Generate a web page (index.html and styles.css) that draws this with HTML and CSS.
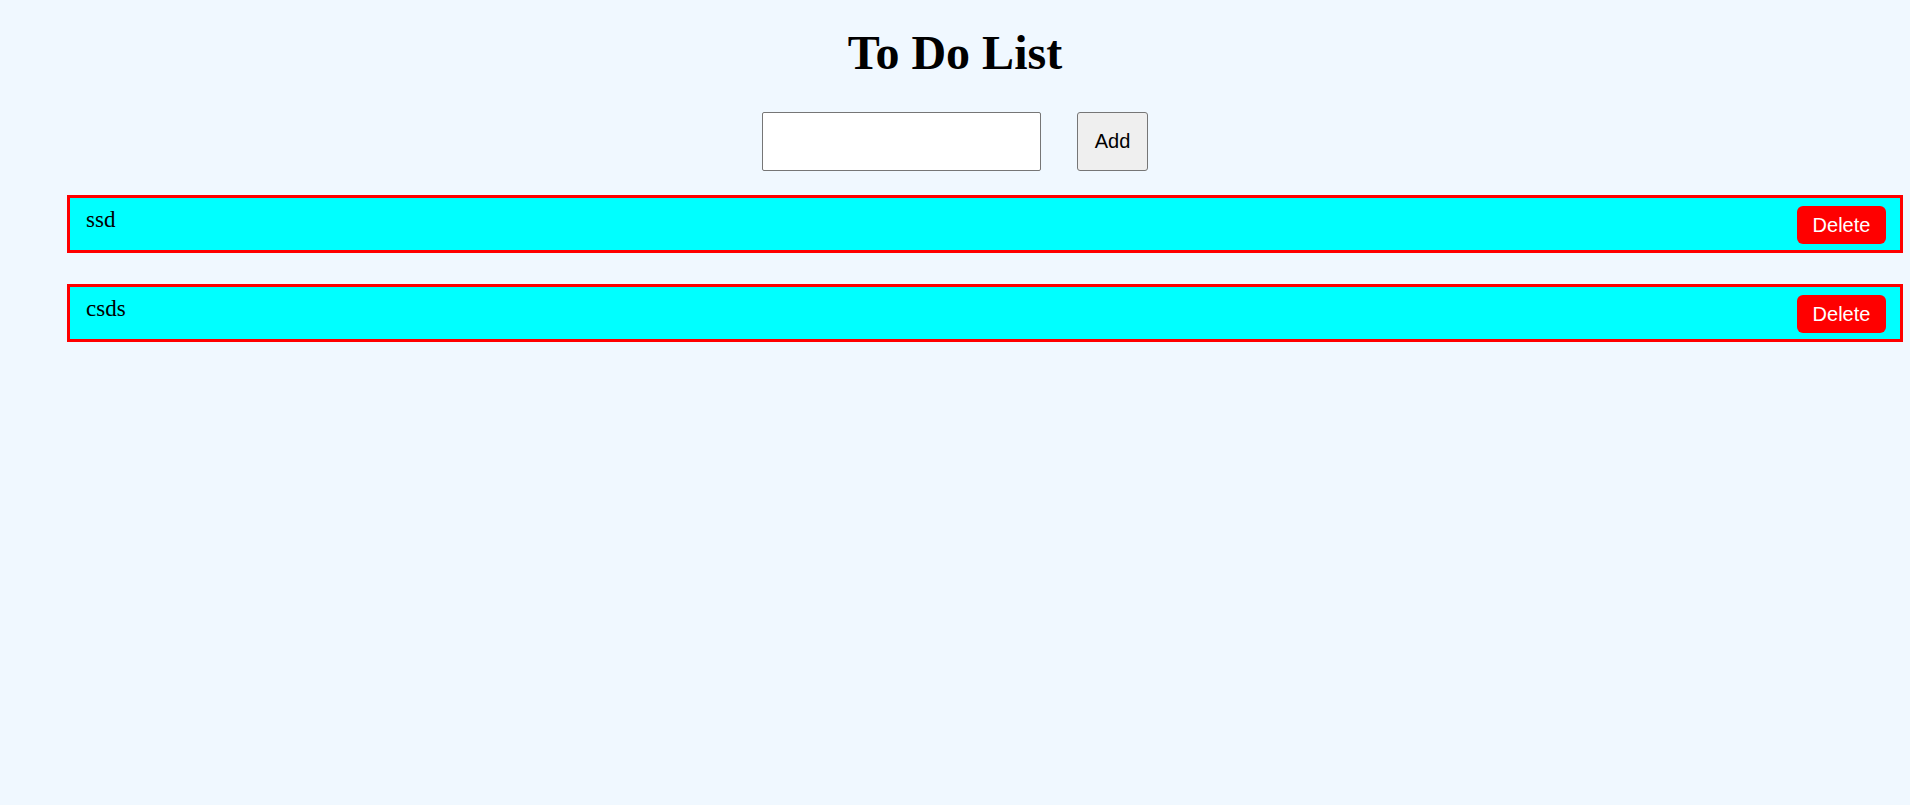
FILE: index.html
```html
<!DOCTYPE html>
<html>
<head>
<meta charset="utf-8">
<title>To Do List</title>
<link rel="stylesheet" href="styles.css">
</head>
<body>
<main class="app">
  <h1 class="title">To Do List</h1>
  <form class="entry">
    <input class="entry-input" type="text">
    <button class="entry-add" type="button">Add</button>
  </form>
  <ul class="list">
    <li class="item"><span class="item-text">ssd</span><button class="item-delete" type="button">Delete</button></li>
    <li class="item"><span class="item-text">csds</span><button class="item-delete" type="button">Delete</button></li>
  </ul>
</main>
</body>
</html>
```
FILE: styles.css
```css
html, body {
  margin: 0;
  padding: 0;
  background: #f0f8ff;
  font-family: "Liberation Serif", "Times New Roman", serif;
  color: #000;
}

.app {
  display: flex;
  flex-direction: column;
  align-items: stretch;
}

.title {
  margin: 0;
  padding-top: 25px;
  font-size: 48px;
  line-height: 55px;
  font-weight: bold;
  text-align: center;
}

.entry {
  margin: 32px 0 0 0;
  display: flex;
  justify-content: center;
  gap: 36px;
}

.entry-input {
  box-sizing: border-box;
  width: 279px;
  height: 59px;
  margin: 0;
  border: 1px solid #767676;
  border-radius: 2px;
  background: #fff;
  padding: 2px 4px;
  font-size: 20px;
}

.entry-add {
  box-sizing: border-box;
  width: 71px;
  height: 59px;
  margin: 0;
  padding: 0;
  border: 1px solid #767676;
  border-radius: 3px;
  background: #efefef;
  font-family: "Liberation Sans", Arial, sans-serif;
  font-size: 20px;
  color: #000;
}

.list {
  list-style: none;
  margin: 24px 7px 0 67px;
  padding: 0;
  display: flex;
  flex-direction: column;
  gap: 31px;
}

.item {
  box-sizing: border-box;
  height: 58px;
  border: 3px solid #ff0000;
  background: #00ffff;
  display: flex;
  justify-content: space-between;
  align-items: flex-start;
  padding: 8px 14px 0 16px;
}

.item-text {
  font-size: 23px;
  line-height: 25px;
  padding-top: 1px;
}

.item-delete {
  box-sizing: border-box;
  width: 89px;
  height: 38px;
  margin: 0;
  padding: 0;
  border: none;
  border-radius: 6px;
  background: #ff0000;
  color: #fff;
  font-family: "Liberation Sans", Arial, sans-serif;
  font-size: 20px;
}
```
